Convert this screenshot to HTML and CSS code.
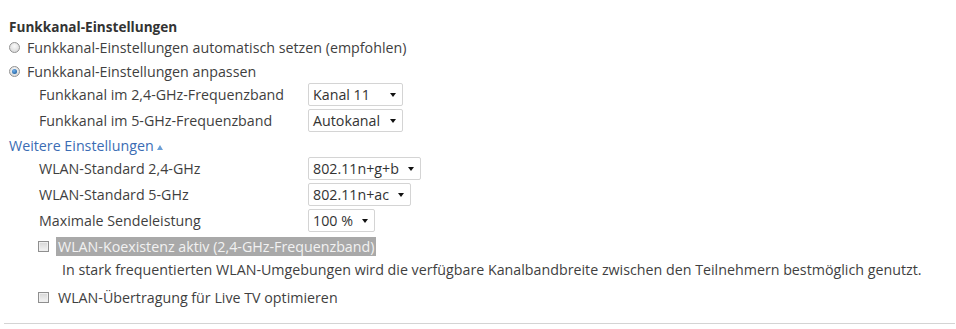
FILE: index.html
```html
<!DOCTYPE html>
<html lang="de">
<head>
    <meta charset="UTF-8">
    <title>Funkkanal-Einstellungen</title>
    <link rel="stylesheet" href="styles.css">
</head>
<body>
    <div class="panel">
        <h3 class="title">Funkkanal-Einstellungen</h3>
        <div class="option">
            <span class="radio"></span>
            <span>Funkkanal-Einstellungen automatisch setzen (empfohlen)</span>
        </div>
        <div class="option">
            <span class="radio checked"></span>
            <span>Funkkanal-Einstellungen anpassen</span>
        </div>
        <div class="row">
            <span class="label">Funkkanal im 2,4-GHz-Frequenzband</span>
            <span class="select wide">Kanal 11<i class="caret"></i></span>
        </div>
        <div class="row">
            <span class="label">Funkkanal im 5-GHz-Frequenzband</span>
            <span class="select wide">Autokanal<i class="caret"></i></span>
        </div>
        <div class="more">
            <a class="more-link">Weitere Einstellungen</a><span class="up"></span>
        </div>
        <div class="row first">
            <span class="label">WLAN-Standard 2,4-GHz</span>
            <span class="select">802.11n+g+b<i class="caret"></i></span>
        </div>
        <div class="row">
            <span class="label">WLAN-Standard 5-GHz</span>
            <span class="select">802.11n+ac<i class="caret"></i></span>
        </div>
        <div class="row">
            <span class="label">Maximale Sendeleistung</span>
            <span class="select">100 %<i class="caret"></i></span>
        </div>
        <div class="check-row">
            <span class="checkbox"></span>
            <span class="check-label marked">WLAN-Koexistenz aktiv (2,4-GHz-Frequenzband)</span>
        </div>
        <p class="hint">In stark frequentierten WLAN-Umgebungen wird die verfügbare Kanalbandbreite zwischen den Teilnehmern bestmöglich genutzt.</p>
        <div class="check-row last">
            <span class="checkbox"></span>
            <span class="check-label">WLAN-Übertragung für Live TV optimieren</span>
        </div>
    </div>
    <hr class="sep">
</body>
</html>
```

FILE: styles.css
```css
body {
    margin: 0;
    background: #fff;
    color: #3f3f3f;
    font-family: "Open Sans", "Liberation Sans", sans-serif;
    font-size: 14.25px;
}

.panel {
    padding: 19px 0 0 9px;
}

.title {
    margin: 0;
    font-size: 13.6px;
    font-weight: bold;
    line-height: 16px;
    color: #333;
}

.option {
    display: flex;
    align-items: center;
    height: 24px;
}

.radio {
    width: 11px;
    height: 11px;
    border-radius: 50%;
    border: 1px solid #929292;
    background: radial-gradient(circle at 50% 35%, #fafafa, #d2d2d2);
    box-sizing: border-box;
    margin-right: 7px;
    position: relative;
}

.radio.checked::after {
    content: '';
    position: absolute;
    left: 2px;
    top: 2px;
    width: 5px;
    height: 5px;
    border-radius: 50%;
    background: radial-gradient(circle at 40% 35%, #6fb0ee, #0f4f8c);
}

.row {
    display: flex;
    align-items: center;
    height: 23px;
    margin-top: 3px;
    padding-left: 30px;
}

.option + .row {
    margin-top: 0;
}

.row.first {
    margin-top: 0;
}

.label {
    width: 269px;
}

.select {
    display: inline-flex;
    align-items: center;
    justify-content: space-between;
    height: 23px;
    box-sizing: border-box;
    border: 1px solid #d4d4d4;
    border-radius: 2px;
    padding: 0 6px 0 4px;
    background: #fff;
    color: #333;
}

.select.wide {
    min-width: 95px;
}

.caret {
    margin-left: 9px;
    width: 0;
    height: 0;
    border-left: 3.5px solid transparent;
    border-right: 3.5px solid transparent;
    border-top: 4px solid #111;
}

.more {
    display: flex;
    align-items: center;
    height: 24px;
    margin-top: 1px;
}

.more-link {
    color: #3b6cb4;
    cursor: pointer;
}

.up {
    width: 0;
    height: 0;
    margin: 5px 0 0 3px;
    border-left: 3.5px solid transparent;
    border-right: 3.5px solid transparent;
    border-bottom: 5px solid #6b9fd6;
}

.check-row {
    display: flex;
    align-items: center;
    height: 24px;
    margin-top: 2px;
    padding-left: 29px;
}

.check-row.last {
    margin-top: 3px;
}

.checkbox {
    width: 11px;
    height: 11px;
    box-sizing: border-box;
    border: 1px solid #8f8f8f;
    background: linear-gradient(#d6d6d6, #f4f4f4);
    box-shadow: inset 0 0 0 1px #efefef;
    margin-right: 7px;
}

.check-label {
    padding: 0 2px;
    line-height: 19px;
}

.check-label.marked {
    background: #a9a9a9;
    color: #f2f2f2;
}

.hint {
    margin: 0;
    padding-left: 53px;
    line-height: 24px;
}

.sep {
    margin: 14px 1px 0 4px;
    border: 0;
    border-top: 1px solid #d4d4d4;
}
```
